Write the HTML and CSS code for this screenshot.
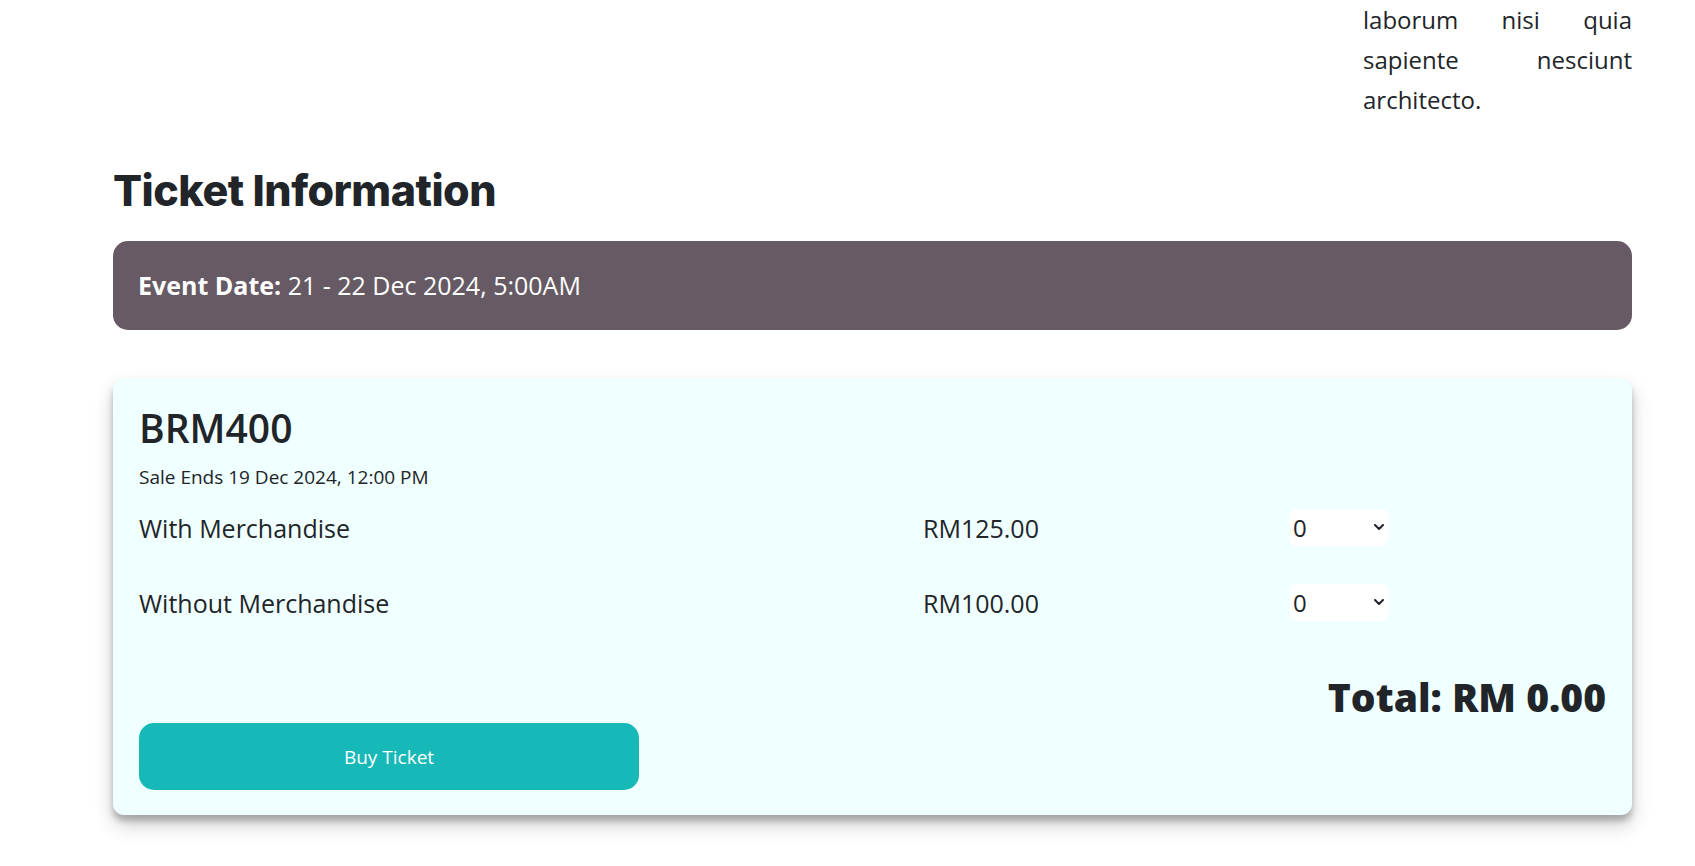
FILE: index.html
```html
<!DOCTYPE html>
<html lang="en">
<head>
<meta charset="utf-8">
<title>Ticket Information</title>
<link rel="stylesheet" href="styles.css">
</head>
<body>
<div class="page">
  <div class="intro">
    <p class="intro-text">laborum nisi quia sapiente nesciunt architecto.</p>
  </div>

  <h2 class="section-title">Ticket Information</h2>

  <div class="event-bar">
    <span><strong>Event Date:</strong> 21 - 22 Dec 2024, 5:00AM</span>
  </div>

  <div class="ticket-card">
    <h3 class="ticket-name">BRM400</h3>
    <p class="sale-ends">Sale Ends 19 Dec 2024, 12:00 PM</p>

    <div class="ticket-rows">
      <div class="ticket-label">With Merchandise</div>
      <div class="ticket-price">RM125.00</div>
      <div class="qty">
        <select class="qty-select"><option>0</option><option>1</option><option>2</option></select>
        <svg class="qty-chevron" viewBox="0 0 10 6" width="10" height="6"><path d="M1 1 L5 5 L9 1" fill="none" stroke="#212529" stroke-width="2" stroke-linecap="round" stroke-linejoin="round"/></svg>
      </div>

      <div class="ticket-label">Without Merchandise</div>
      <div class="ticket-price">RM100.00</div>
      <div class="qty">
        <select class="qty-select"><option>0</option><option>1</option><option>2</option></select>
        <svg class="qty-chevron" viewBox="0 0 10 6" width="10" height="6"><path d="M1 1 L5 5 L9 1" fill="none" stroke="#212529" stroke-width="2" stroke-linecap="round" stroke-linejoin="round"/></svg>
      </div>
    </div>

    <div class="total">Total: RM 0.00</div>
    <button class="buy-btn" type="button">Buy Ticket</button>
  </div>
</div>
</body>
</html>
```

FILE: styles.css
```css
* { box-sizing: border-box; }

html, body {
  margin: 0;
  padding: 0;
  background: #ffffff;
}

body {
  font-family: "Open Sans", "Noto Sans", sans-serif;
  color: #212529;
  min-height: 866px;
}

.page {
  width: 1519px;
  margin-left: 113px;
  padding-bottom: 40px;
}

.intro {
  display: flex;
  justify-content: flex-end;
}

.intro-text {
  width: 269px;
  margin: 0;
  font-size: 24px;
  line-height: 40px;
  text-align: justify;
}

.section-title {
  font-family: "Inter", sans-serif;
  font-weight: 800;
  font-size: 43px;
  letter-spacing: -0.5px;
  line-height: 1.2;
  margin: 45px 0 24px;
}

.event-bar {
  height: 89px;
  background: #665a64;
  border-radius: 15px;
  color: #ffffff;
  font-size: 25px;
  padding: 0 25px;
  display: flex;
  align-items: center;
}

.event-bar strong { font-weight: 700; }

.ticket-card {
  margin-top: 49px;
  background: #f0ffff;
  border-radius: 11px;
  box-shadow: 0 10px 20px rgba(0, 0, 0, 0.19), 0 6px 6px rgba(0, 0, 0, 0.23);
  padding: 26px 26px 25px;
}

.ticket-name {
  margin: 0;
  font-size: 39px;
  font-weight: 600;
  line-height: 1.2;
}

.sale-ends {
  margin: 13px 0 0;
  font-size: 19px;
}

.ticket-rows {
  display: grid;
  grid-template-columns: 784px 366px 100px;
  grid-auto-rows: 37px;
  row-gap: 38px;
  align-items: center;
  margin-top: 19px;
  font-size: 25px;
}

.qty {
  position: relative;
  width: 100px;
  height: 37px;
}

.qty-select {
  appearance: none;
  -webkit-appearance: none;
  width: 100%;
  height: 100%;
  border: none;
  border-radius: 8px;
  background: #ffffff;
  font-family: inherit;
  font-size: 24px;
  color: #212529;
  padding: 0 0 0 4px;
  outline: none;
}

.qty-chevron {
  position: absolute;
  right: 5px;
  top: 15px;
  pointer-events: none;
}

.total {
  text-align: right;
  font-family: "Open Sans", sans-serif;
  font-weight: 800;
  font-size: 39px;
  line-height: 1.2;
  margin-top: 53px;
}

.buy-btn {
  display: block;
  width: 500px;
  height: 67px;
  border: none;
  border-radius: 15px;
  background: #17b8b8;
  color: #ffffff;
  font-family: inherit;
  font-size: 19px;
  margin-top: 2px;
}
```
